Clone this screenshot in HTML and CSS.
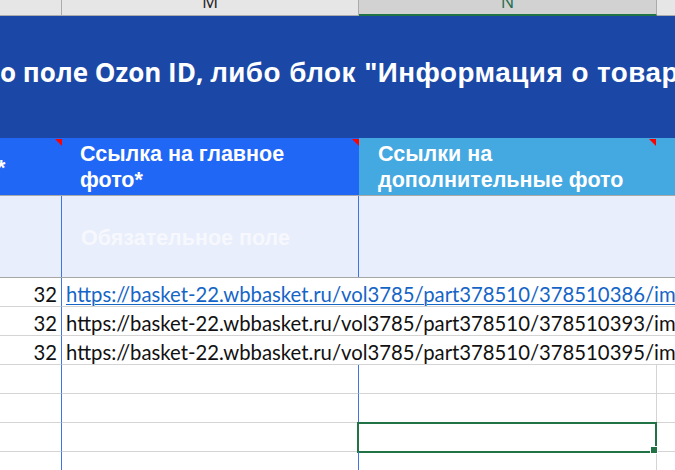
FILE: index.html
```html
<!DOCTYPE html>
<html lang="ru">
<head>
<meta charset="utf-8">
<link rel="stylesheet" href="styles.css">
</head>
<body>
<div class="sheet">
  <div class="colheads">
    <div class="ch ch-l"></div>
    <div class="ch ch-m"><span>M</span></div>
    <div class="ch ch-n"><span>N</span></div>
    <div class="ch ch-o"></div>
  </div>

  <div class="title"><p class="title-text"><span class="t1">о поле Ozon ID, </span><span class="t2">либо блок "Информация о товаре"</span></p></div>

  <div class="row hrow">
    <div class="hc hc-l"><span class="star">*</span><i class="note"></i></div>
    <div class="hc hc-m"><span>Ссылка на главное<br>фото*</span><i class="note"></i></div>
    <div class="hc hc-n"><span>Ссылки на<br>дополнительные фото</span><i class="note"></i></div>
    <div class="hc hc-o"></div>
  </div>

  <div class="row hint">
    <div class="c c-l"></div>
    <div class="c c-m"><span>Обязательное поле</span></div>
    <div class="c c-n"></div>
    <div class="c c-o"></div>
  </div>

  <div class="row data">
    <div class="c c-l num">32</div>
    <div class="c c-m over"><a class="link">https://basket-22.wbbasket.ru/vol3785/part378510/378510386/images/big/1.webp</a></div>
    <div class="c c-n open"></div>
    <div class="c c-o"></div>
  </div>
  <div class="row data">
    <div class="c c-l num">32</div>
    <div class="c c-m over"><span>https://basket-22.wbbasket.ru/vol3785/part378510/378510393/images/big/1.webp</span></div>
    <div class="c c-n open"></div>
    <div class="c c-o"></div>
  </div>
  <div class="row data">
    <div class="c c-l num">32</div>
    <div class="c c-m over"><span>https://basket-22.wbbasket.ru/vol3785/part378510/378510395/images/big/1.webp</span></div>
    <div class="c c-n open"></div>
    <div class="c c-o"></div>
  </div>
  <div class="row data">
    <div class="c c-l"></div>
    <div class="c c-m"></div>
    <div class="c c-n"></div>
    <div class="c c-o"></div>
  </div>
  <div class="row data">
    <div class="c c-l"></div>
    <div class="c c-m"></div>
    <div class="c c-n"></div>
    <div class="c c-o"></div>
  </div>
  <div class="row data">
    <div class="c c-l"></div>
    <div class="c c-m"></div>
    <div class="c c-n active"><i class="handle"></i></div>
    <div class="c c-o"></div>
  </div>
  <div class="row data">
    <div class="c c-l"></div>
    <div class="c c-m"></div>
    <div class="c c-n"></div>
    <div class="c c-o"></div>
  </div>
</div>
</body>
</html>
```

FILE: styles.css
```css
html, body {
  margin: 0;
  padding: 0;
  background: #ffffff;
}
body {
  width: 675px;
  height: 470px;
  overflow: hidden;
}
.sheet {
  width: 675px;
  display: flex;
  flex-direction: column;
}

/* column letters */
.colheads {
  display: grid;
  grid-template-columns: 62px 297px 298px 1fr;
  height: 16px;
}
.ch {
  background: #e6e6e6;
  border-bottom: 1px solid #ababab;
  border-right: 1px solid #ababab;
  height: 15px;
  overflow: hidden;
  display: flex;
  justify-content: center;
  align-items: flex-end;
  font-family: "Open Sans", sans-serif;
  font-size: 18px;
  color: #262626;
}
.ch span {
  line-height: 18px;
  margin-bottom: 5px;
}
.ch-n {
  background: #d2d2d2;
  border-bottom: 2px solid #217346;
  height: 14px;
  color: #1f6f50;
}
.ch-n span { margin-bottom: 4px; }
.ch-o { border-right: none; }

/* title band */
.title {
  height: 122px;
  background: #1b48a7;
  color: #ffffff;
  font-weight: 700;
  white-space: nowrap;
  overflow: hidden;
}
.title-text {
  margin: 0;
  padding-top: 41px;
  line-height: 30px;
}
.t1 {
  font-family: "Open Sans", sans-serif;
  font-size: 26px;
}
.t2 {
  font-family: "Liberation Sans", Arial, sans-serif;
  font-size: 27.8px;
  letter-spacing: 0.5px;
}

/* generic row */
.row {
  display: grid;
  grid-template-columns: 62px 297px 298px 1fr;
}

/* header row */
.hrow {
  height: 57px;
  border-bottom: 1px solid #a9a9a9;
  font-family: "Liberation Sans", Arial, sans-serif;
  font-weight: 700;
  font-size: 21.5px;
  line-height: 26px;
  color: #ffffff;
}
.hc {
  position: relative;
  overflow: hidden;
  display: flex;
  align-items: center;
}
.hc-l, .hc-m { background: #2167f5; }
.hc-n, .hc-o { background: #44a8e1; }
.hc-l .star { margin-left: -3px; margin-top: 2px; }
.hc-m span { padding: 1px 0 0 18px; }
.hc-n span { padding: 1px 0 0 19px; }
.note {
  position: absolute;
  top: 1px;
  right: 0;
  width: 0;
  height: 0;
  border-top: 7px solid #ff0000;
  border-left: 7px solid transparent;
}
.hc-n .note { right: 1px; }

/* hint row */
.hint {
  height: 82px;
  background: #e8eefb;
  border-bottom: 1px solid #a6a6a6;
  box-sizing: border-box;
}
.hint .c {
  display: flex;
  align-items: center;
}
.hint .c-l, .hint .c-m { border-right: 1px solid #3f73e6; }
.hint .c-m span {
  padding-left: 19px;
  padding-top: 3px;
  font-family: "Liberation Sans", Arial, sans-serif;
  font-weight: 700;
  font-size: 21.5px;
  color: #f6f8fd;
}

/* data rows */
.data {
  height: 29px;
  font-family: Lato, "Open Sans", sans-serif;
  font-size: 20.3px;
  color: #111111;
}
.data .c {
  border-bottom: 1px solid #d4d4d4;
  display: flex;
  align-items: flex-end;
  position: relative;
  line-height: 24px;
}
.data .c-l { border-right: 1px solid #3f73e6; }
.data .c-m { border-right: 1px solid #3f73e6; }
.data .c-n { border-right: 1px solid #d4d4d4; }
.data .c-m.over {
  border-right: none;
  overflow: visible;
  white-space: nowrap;
  z-index: 1;
  padding-left: 4px;
}
.data .c-n.open { border-right: none; }
.num {
  justify-content: flex-end;
  padding-right: 4px;
}
.link {
  color: #1565c7;
  text-decoration: underline;
  text-decoration-thickness: 1px;
  text-underline-offset: 2px;
}
.active::after {
  content: "";
  position: absolute;
  left: -2px;
  top: -1px;
  width: 296px;
  height: 27px;
  border: 2px solid #217346;
  pointer-events: none;
}
.handle {
  position: absolute;
  right: -2px;
  bottom: -3px;
  width: 6px;
  height: 6px;
  background: #217346;
  border: 1px solid #ffffff;
  z-index: 2;
}
```
